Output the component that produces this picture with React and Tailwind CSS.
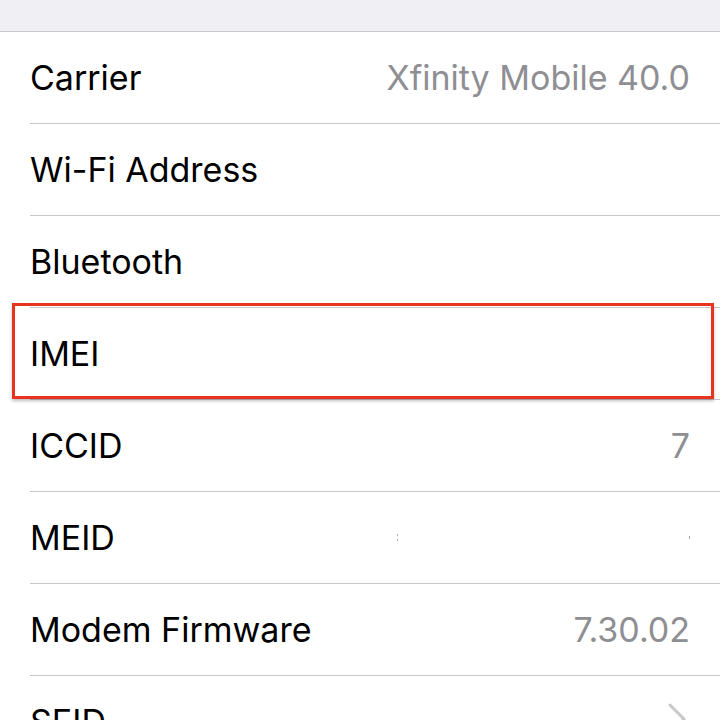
export default function App() {
  const rows = [
    { label: "Carrier", value: "Xfinity Mobile 40.0" },
    { label: "Wi-Fi Address", value: "" },
    { label: "Bluetooth", value: "" },
    { label: "IMEI", value: "", boxed: true },
    { label: "ICCID", value: "7" },
    { label: "MEID", value: "", dots: true },
    { label: "Modem Firmware", value: "7.30.02" },
    { label: "SEID", value: "", chevron: true },
  ];
  return (
    <div
      className="w-[720px] h-[720px] overflow-hidden bg-white"
      style={{ fontFamily: "Inter, 'Open Sans', sans-serif" }}
    >
      <div className="h-[32px] bg-[#efeff4] border-b border-[#c8c7cc]" />
      {rows.map((r, i) => (
        <div key={i} className="relative pl-[30px]">
          <div className="h-[92px] flex items-center pr-[30px] border-b border-[#c8c7cc]">
            <span className="text-[34px] text-black flex-1">{r.label}</span>
            {r.value && (
              <span className="text-[34px] text-[#8e8e93]">{r.value}</span>
            )}
            {r.dots && (
              <div className="w-[293px] flex justify-between items-center">
                <div className="flex flex-col gap-[3px]">
                  <span className="w-[1px] h-[2px] bg-[#aaa]" />
                  <span className="w-[1px] h-[2px] bg-[#aaa]" />
                </div>
                <span className="w-[1px] h-[3px] bg-[#aaa]" />
              </div>
            )}
            {r.chevron && (
              <svg width="18" height="32" viewBox="0 0 18 32" className="self-start mt-[27px] mr-[4px]">
                <path d="M2 2 L16 16 L2 30" fill="none" stroke="#c7c7cc" strokeWidth="3" strokeLinecap="round" strokeLinejoin="round" />
              </svg>
            )}
          </div>
          {r.boxed && (
            <div className="absolute top-[-5px] bottom-[1px] left-[12px] right-[6px] border-[3px] border-[#e8341f] shadow-[0_2px_3px_rgba(0,0,0,0.25)]" />
          )}
        </div>
      ))}
    </div>
  );
}
